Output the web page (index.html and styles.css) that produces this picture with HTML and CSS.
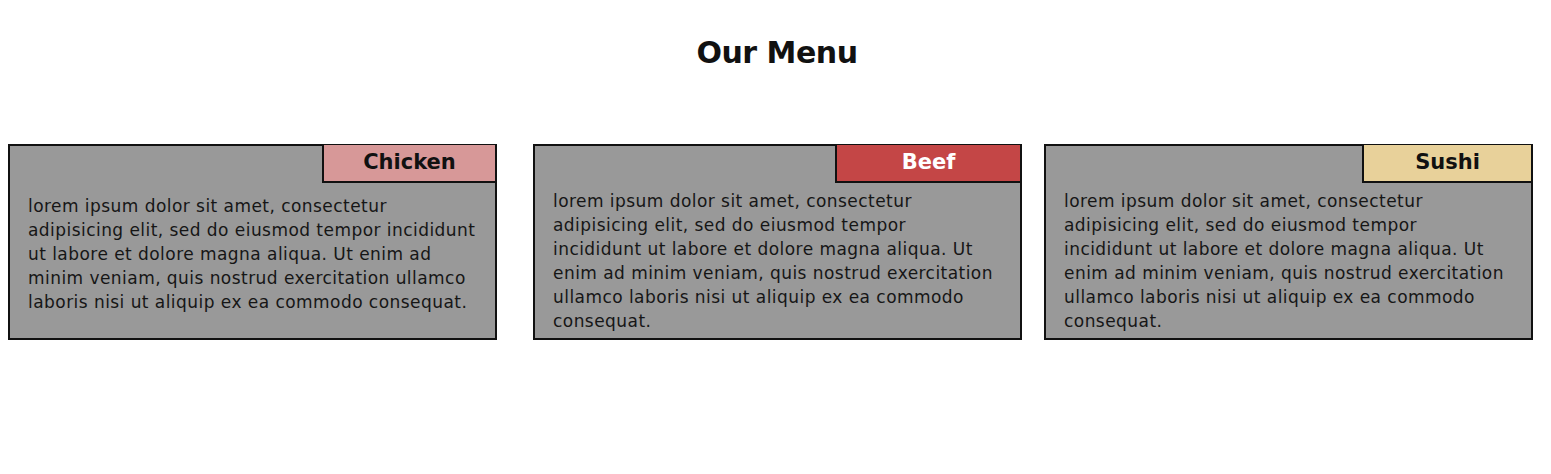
FILE: index.html
```html
<!DOCTYPE html>
<html>
<head>
<meta charset="utf-8">
<link rel="stylesheet" href="styles.css">
</head>
<body>
<h1 class="title">Our Menu</h1>
<div class="menu">
  <div class="card card-chicken">
    <div class="tag tag-chicken">Chicken</div>
    <div class="body"><p class="text">lorem ipsum dolor sit amet, consectetur<br>adipisicing elit, sed do eiusmod tempor incididunt<br>ut labore et dolore magna aliqua. Ut enim ad<br>minim veniam, quis nostrud exercitation ullamco<br>laboris nisi ut aliquip ex ea commodo consequat.</p></div>
  </div>
  <div class="card card-beef">
    <div class="tag tag-beef">Beef</div>
    <div class="body"><p class="text">lorem ipsum dolor sit amet, consectetur<br>adipisicing elit, sed do eiusmod tempor<br>incididunt ut labore et dolore magna aliqua. Ut<br>enim ad minim veniam, quis nostrud exercitation<br>ullamco laboris nisi ut aliquip ex ea commodo<br>consequat.</p></div>
  </div>
  <div class="card card-sushi">
    <div class="tag tag-sushi">Sushi</div>
    <div class="body"><p class="text">lorem ipsum dolor sit amet, consectetur<br>adipisicing elit, sed do eiusmod tempor<br>incididunt ut labore et dolore magna aliqua. Ut<br>enim ad minim veniam, quis nostrud exercitation<br>ullamco laboris nisi ut aliquip ex ea commodo<br>consequat.</p></div>
  </div>
</div>
</body>
</html>
```

FILE: styles.css
```css
* { box-sizing: border-box; }
body {
  margin: 0;
  background: #ffffff;
  font-family: "DejaVu Sans", "Noto Sans", sans-serif;
  color: #111;
}
.title {
  margin: 0;
  padding-top: 34px;
  padding-left: 3px;
  height: 144px;
  text-align: center;
  font-size: 30px;
  font-weight: 700;
  letter-spacing: -0.5px;
  line-height: 38px;
}
.menu {
  display: flex;
  padding-left: 8px;
}
.card {
  width: 489px;
  height: 196px;
  background: #999999;
  border: 2px solid #111;
  display: flex;
  flex-direction: column;
}
.card-beef { margin-left: 36px; }
.card-sushi { margin-left: 22px; }
.tag {
  align-self: flex-end;
  height: 38px;
  border-left: 2px solid #111;
  border-bottom: 2px solid #111;
  margin-top: -1px;
  text-align: center;
  font-size: 21px;
  font-weight: 700;
  line-height: 35px;
}
.tag-chicken { width: 173px; background: #d79898; }
.tag-beef { width: 185px; background: #c44646; color: #fff; }
.tag-sushi { width: 169px; background: #e8d19a; }
.body {
  flex: 1;
  display: flex;
  align-items: center;
  padding: 0 18px;
}
.card-chicken .body { padding-bottom: 14px; }
.text {
  margin: 0;
  font-size: 17px;
  letter-spacing: 0.45px;
  line-height: 24px;
  white-space: nowrap;
  color: #161616;
}
```
